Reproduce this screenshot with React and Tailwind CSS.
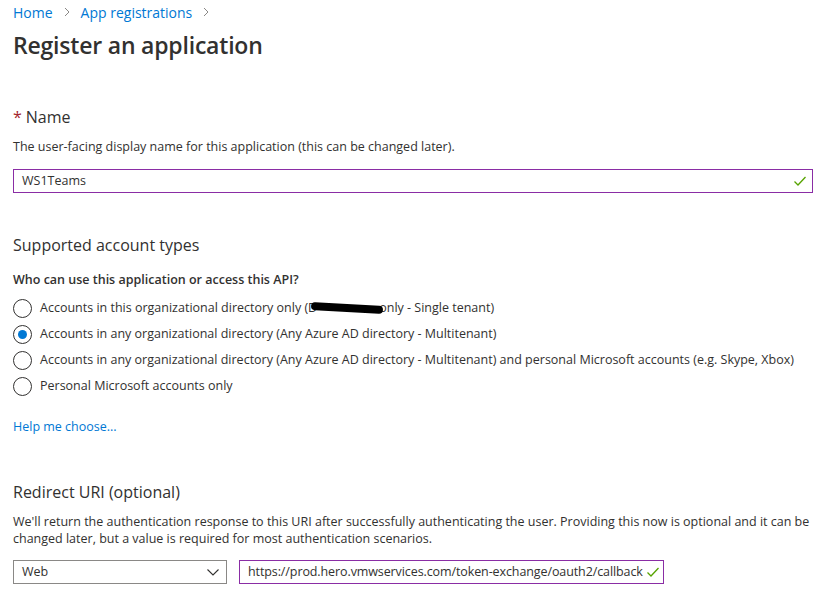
import React from "react";

const Check = ({ className = "" }) => (
  <svg width="14" height="14" viewBox="0 0 14 14" className={"shrink-0 " + className}>
    <path d="M1.5 7.5 L5 11 L12.5 3" fill="none" stroke="#57a300" strokeWidth="1.3" />
  </svg>
);

const Radio = ({ checked }) => (
  <span className="w-[19px] h-[19px] rounded-full border border-[#323130] flex items-center justify-center shrink-0 bg-white">
    {checked && <span className="w-[9px] h-[9px] rounded-full bg-[#0078d4]" />}
  </span>
);

const Chevron = () => (
  <svg width="10" height="10" viewBox="0 0 10 10" className="mx-[9px]">
    <path d="M3 1 L7 5 L3 9" fill="none" stroke="#8a8886" strokeWidth="1" />
  </svg>
);

export default function App() {
  const options = [
    { label: null, checked: false },
    { label: "Accounts in any organizational directory (Any Azure AD directory - Multitenant)", checked: true },
    { label: "Accounts in any organizational directory (Any Azure AD directory - Multitenant) and personal Microsoft accounts (e.g. Skype, Xbox)", checked: false },
    { label: "Personal Microsoft accounts only", checked: false },
  ];
  return (
    <div className="w-[825px] h-[610px] bg-white text-[#323130] overflow-hidden pl-[13px] pr-[12px]" style={{ fontFamily: '"Segoe UI", "Open Sans", sans-serif' }}>
      <div className="flex items-center h-[24px] text-[14px] text-[#0078d4]">
        <span>Home</span>
        <Chevron />
        <span>App registrations</span>
        <Chevron />
      </div>
      <h1 className="text-[23px] font-semibold leading-[32px] mt-[5px] tracking-[-0.2px]">Register an application</h1>

      <div className="mt-[45px] text-[16px] leading-[22px] flex items-center">
        <span className="text-[#a4262c] mr-[4px]">*</span>Name
      </div>
      <div className="text-[12.5px] leading-[17px] mt-[10px]">
        The user-facing display name for this application (this can be changed later).
      </div>
      <div className="mt-[14px] h-[24px] border border-[#8a2da5] flex items-center justify-between pl-[8px] pr-[5px] text-[12.5px]">
        <span>WS1Teams</span>
        <Check />
      </div>

      <div className="mt-[41px] text-[16px] leading-[22px]">Supported account types</div>
      <div className="mt-[15px] text-[12.5px] leading-[17px] font-semibold">Who can use this application or access this API?</div>
      <div className="mt-[7px] flex flex-col">
        {options.map((o, i) => (
          <div key={i} className="flex items-center h-[26px] text-[12.5px]">
            <Radio checked={o.checked} />
            <span className="ml-[8px] whitespace-nowrap">
              {o.label ?? (
                <>
                  Accounts in this organizational directory only (D
                  <span className="relative inline-block w-[72px] h-[10px] align-middle -ml-[6px] -mr-[4px]">
                    <span className="absolute left-0 top-[1px] w-[72px] h-[8px] rounded-full bg-black rotate-[3deg]" />
                  </span>
                  only - Single tenant)
                </>
              )}
            </span>
          </div>
        ))}
      </div>
      <div className="mt-[19px] text-[12.5px] text-[#0078d4] leading-[17px]">Help me choose...</div>

      <div className="mt-[46px] text-[16px] leading-[22px]">Redirect URI (optional)</div>
      <div className="mt-[10px] text-[12.5px] leading-[17px]">
        We'll return the authentication response to this URI after successfully authenticating the user. Providing this now is optional and it can be changed later, but a value is required for most authentication scenarios.
      </div>
      <div className="mt-[13px] flex items-center gap-[12px]">
        <div className="w-[214px] h-[24px] border border-[#8a8886] flex items-center justify-between pl-[8px] pr-[6px] text-[12.5px]">
          <span>Web</span>
          <svg width="14" height="10" viewBox="0 0 14 10">
            <path d="M1.5 2.5 L7 8 L12.5 2.5" fill="none" stroke="#323130" strokeWidth="1.1" />
          </svg>
        </div>
        <div className="w-[425px] h-[24px] border border-[#8a2da5] flex items-center justify-between pl-[8px] pr-[3px] text-[12.5px] whitespace-nowrap overflow-hidden">
          <span className="tracking-[-0.1px]">https://prod.hero.vmwservices.com/token-exchange/oauth2/callback</span>
          <Check />
        </div>
      </div>
    </div>
  );
}
